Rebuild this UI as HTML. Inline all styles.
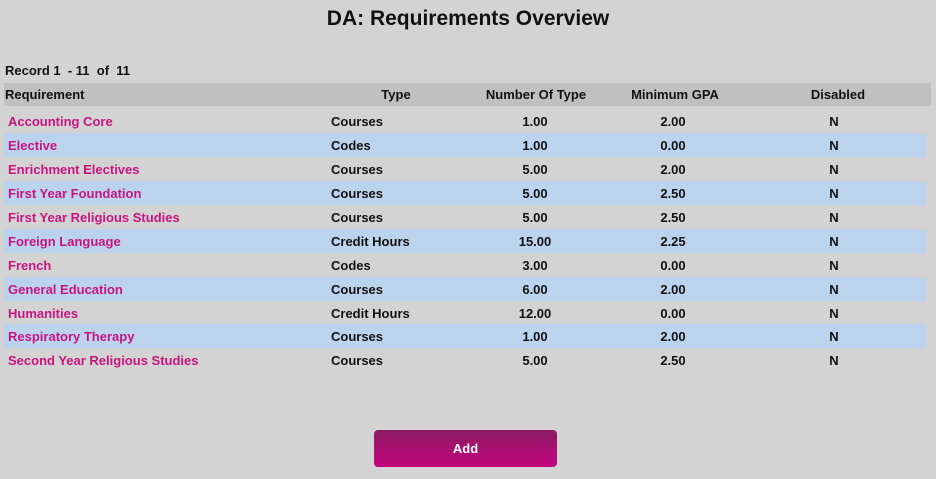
<!DOCTYPE html>
<html><head><style>
body{margin:0;width:936px;height:479px;background:#d3d3d3;font-family:"Liberation Sans",sans-serif;font-weight:bold;font-size:13px;color:#111;position:relative;overflow:hidden}
h1{position:absolute;top:6px;left:0;width:936px;text-align:center;font-size:21px;margin:0;line-height:26px}
.rec{position:absolute;left:5px;top:63px;font-size:13px}
.hdr{position:absolute;left:4px;top:83px;width:927px;height:23px;background:#c0c0c0}
.row{position:absolute;left:4px;width:922px;height:24px}
.b{background:#bcd3ee}
.c{position:absolute;top:1px;line-height:24px;white-space:nowrap}
.hdr .c{line-height:23px;top:0}
.n{left:4px;color:#c7147f}
.t{left:327px}
.x{width:120px;text-align:center}
.btn{position:absolute;left:374px;top:430px;width:183px;height:37px;border-radius:4px;background:linear-gradient(#8d1b62,#c2047f);color:#fff;text-align:center;line-height:37px;font-size:13px}
</style></head><body>
<h1>DA: Requirements Overview</h1>
<div class="rec">Record 1&nbsp; - 11&nbsp; of&nbsp; 11</div>
<div class="hdr"><span class="c" style="left:1px">Requirement</span><span class="c x" style="left:332px">Type</span><span class="c x" style="left:472px">Number Of Type</span><span class="c x" style="left:611px">Minimum GPA</span><span class="c x" style="left:774px">Disabled</span></div>
<div class="row" style="top:109px"><span class="c n">Accounting Core</span><span class="c t">Courses</span><span class="c x" style="left:471px">1.00</span><span class="c x" style="left:609px">2.00</span><span class="c x" style="left:770px">N</span></div>
<div class="row b" style="top:133px"><span class="c n">Elective</span><span class="c t">Codes</span><span class="c x" style="left:471px">1.00</span><span class="c x" style="left:609px">0.00</span><span class="c x" style="left:770px">N</span></div>
<div class="row" style="top:157px"><span class="c n">Enrichment Electives</span><span class="c t">Courses</span><span class="c x" style="left:471px">5.00</span><span class="c x" style="left:609px">2.00</span><span class="c x" style="left:770px">N</span></div>
<div class="row b" style="top:181px"><span class="c n">First Year Foundation</span><span class="c t">Courses</span><span class="c x" style="left:471px">5.00</span><span class="c x" style="left:609px">2.50</span><span class="c x" style="left:770px">N</span></div>
<div class="row" style="top:205px"><span class="c n">First Year Religious Studies</span><span class="c t">Courses</span><span class="c x" style="left:471px">5.00</span><span class="c x" style="left:609px">2.50</span><span class="c x" style="left:770px">N</span></div>
<div class="row b" style="top:229px"><span class="c n">Foreign Language</span><span class="c t">Credit Hours</span><span class="c x" style="left:471px">15.00</span><span class="c x" style="left:609px">2.25</span><span class="c x" style="left:770px">N</span></div>
<div class="row" style="top:253px"><span class="c n">French</span><span class="c t">Codes</span><span class="c x" style="left:471px">3.00</span><span class="c x" style="left:609px">0.00</span><span class="c x" style="left:770px">N</span></div>
<div class="row b" style="top:277px"><span class="c n">General Education</span><span class="c t">Courses</span><span class="c x" style="left:471px">6.00</span><span class="c x" style="left:609px">2.00</span><span class="c x" style="left:770px">N</span></div>
<div class="row" style="top:301px"><span class="c n">Humanities</span><span class="c t">Credit Hours</span><span class="c x" style="left:471px">12.00</span><span class="c x" style="left:609px">0.00</span><span class="c x" style="left:770px">N</span></div>
<div class="row b" style="top:324px"><span class="c n">Respiratory Therapy</span><span class="c t">Courses</span><span class="c x" style="left:471px">1.00</span><span class="c x" style="left:609px">2.00</span><span class="c x" style="left:770px">N</span></div>
<div class="row" style="top:348px"><span class="c n">Second Year Religious Studies</span><span class="c t">Courses</span><span class="c x" style="left:471px">5.00</span><span class="c x" style="left:609px">2.50</span><span class="c x" style="left:770px">N</span></div>
<div class="btn">Add</div>
</body></html>
